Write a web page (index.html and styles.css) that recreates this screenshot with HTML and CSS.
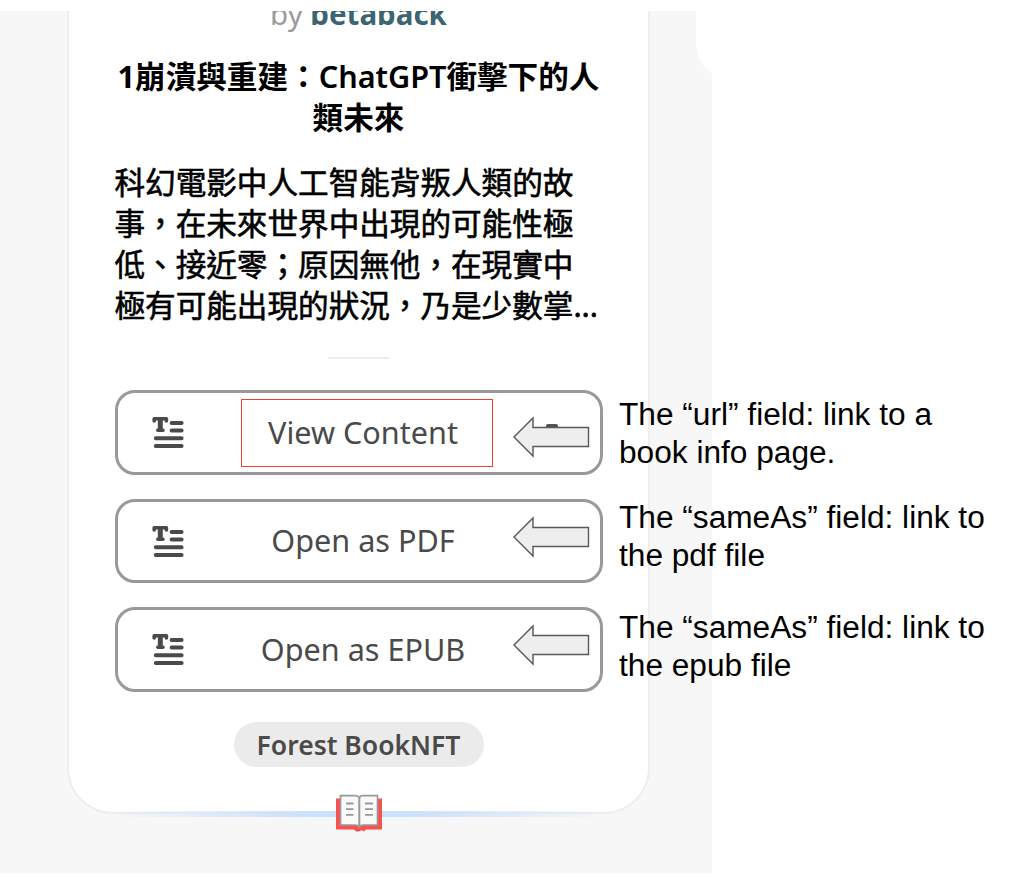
FILE: index.html
```html
<!DOCTYPE html>
<html lang="zh-Hant">
<head>
<meta charset="utf-8">
<title>Forest BookNFT</title>
<link rel="stylesheet" href="styles.css">
</head>
<body>
<svg width="0" height="0" class="defs">
  <symbol id="text-icon" viewBox="0 0 34 34">
    <g fill="none" stroke="#4a4a4a" stroke-linecap="round">
      <path d="M3.2 6V3.8H15.4V6M6.8 15.3H12" stroke-width="3.6" stroke-linejoin="round"/>
      <path d="M9.3 4V15" stroke-width="5" stroke-linecap="butt"/>
      <path d="M20.6 8H30.6M20.6 15.6H30.6M4.8 23.3H30.6M4.8 31H30.6" stroke-width="4"/>
    </g>
  </symbol>
  <symbol id="arrow" viewBox="0 0 78 42">
    <path d="M2 21L21 2V11.5H76.5V30.5H21V40Z" fill="#eee" stroke="#595959" stroke-width="1.4"/>
  </symbol>
</svg>
<main class="panel">
  <svg class="notch" viewBox="0 0 16 65"><path d="M0 0H16V63C6 54 0 45 0 31Z" fill="#fff"/></svg>
  <article class="card">
    <div class="byline"><p>by <b>betaback</b></p></div>
    <h1 class="title">1崩潰與重建：<span class="latin">ChatGPT</span>衝擊下的人<br>類未來</h1>
    <p class="summary">科幻電影中人工智能背叛人類的故<br>事，在未來世界中出現的可能性極<br>低、接近零；原因無他，在現實中<br>極有可能出現的狀況，乃是少數掌<span class="dots">...</span></p>
    <hr class="rule">
    <div class="actions">
      <a class="action first"><svg class="icon"><use href="#text-icon"/></svg><span class="label">View Content</span><i class="dash"></i><svg class="arrow"><use href="#arrow"/></svg><i class="highlight"></i></a>
      <a class="action"><svg class="icon"><use href="#text-icon"/></svg><span class="label">Open as PDF</span><svg class="arrow"><use href="#arrow"/></svg></a>
      <a class="action"><svg class="icon"><use href="#text-icon"/></svg><span class="label">Open as EPUB</span><svg class="arrow"><use href="#arrow"/></svg></a>
    </div>
    <span class="tag">Forest BookNFT</span>
    <div class="glow"></div>
    <svg class="book" viewBox="0 0 48 38">
      <path d="M1 4.5H47V35.5H31L29 37.5L26.5 36L24 37.5L21 37.5L19 35.5H1Z" fill="#f8514f"/>
      <path d="M5.5 1.7H20Q23 1.7 24.3 3.5Q25.5 1.7 28.5 1.7H42.5V31H28Q25.5 31 24.3 33Q23 31 20 31H5.5Z" fill="#fafafa" stroke="#999" stroke-width="1.7"/>
      <path d="M24.3 3.5V33" stroke="#999" stroke-width="2"/>
      <path d="M11 9.5H18.5M11 15.2H18.5M11 20.9H18.5M30 9.5H38M30 15.2H38M30 20.9H38" stroke="#999" stroke-width="1.8"/>
    </svg>
  </article>
</main>
<aside class="notes">
  <p>The “url” field: link to a<br>book info page.</p>
  <p>The “sameAs” field: link to<br>the pdf file</p>
  <p>The “sameAs” field: link to<br>the epub file</p>
</aside>
</body>
</html>
```
FILE: styles.css
```css
* { box-sizing: border-box; }
body { margin: 0; padding-top: 11px; height: 882px; background: #fff; overflow: hidden; font-family: "Noto Sans", "Noto Sans CJK TC", sans-serif; position: relative; }
.defs { position: absolute; }
p, h1 { margin: 0; }
.panel { position: relative; width: 712px; height: 862px; padding-left: 67px; background: #f7f7f7; }
.notch { position: absolute; right: 0; top: 0; width: 16px; height: 65px; }
.card { position: relative; width: 583px; height: 803px; padding: 0 45px; background: #fff; border: 2px solid #eee; border-top: 0; border-radius: 0 0 46px 46px; display: flex; flex-direction: column; align-items: center; }
.byline { height: 24px; width: 100%; overflow: hidden; display: flex; justify-content: center; align-items: flex-end; color: #9b9b9b; font-size: 29.5px; line-height: 42px; }
.byline b { color: #3b6570; font-weight: 700; }
.title { margin-top: 21px; width: 488px; font-size: 30.6px; line-height: 41px; font-weight: 700; text-align: center; white-space: nowrap; color: #000; }
.latin { font-weight: 600; }
.summary { margin-top: 23px; width: 488px; font-family: "Noto Sans CJK TC", sans-serif; font-size: 30.6px; line-height: 41px; white-space: nowrap; color: #000; -webkit-text-stroke: 0.6px #000; }
.dots { font-family: "Noto Sans", sans-serif; }
.rule { margin: 31px 0 0; border: 0; width: 61px; height: 2px; background: #eee; }
.actions { margin-top: 31px; display: flex; flex-direction: column; gap: 24px; }
.action { position: relative; width: 488px; height: 84.5px; border: 3px solid #999; border-radius: 20px; display: flex; align-items: center; justify-content: center; padding: 0 0 1px 9px; color: #4a4a4a; font-size: 30.6px; line-height: 42px; }
.icon { position: absolute; left: 33.5px; top: 22px; width: 34px; height: 34px; }
.arrow { position: absolute; left: 394px; top: 14px; width: 78px; height: 42px; }
.first .arrow { top: 23px; }
.dash { position: absolute; left: 428px; top: 31px; width: 12px; height: 5px; background: #555; border-radius: 2px; }
.highlight { position: absolute; left: 123px; top: 6px; width: 252px; height: 68px; border: 1.5px solid #f04030; }
.tag { margin-top: 30px; width: 250px; height: 45px; border-radius: 23px; background: #ebebeb; color: #4a4a4a; font-size: 26.5px; line-height: 46px; font-weight: 600; text-align: center; white-space: nowrap; }
.glow { position: absolute; left: 35px; right: 35px; bottom: -5px; height: 6px; background: linear-gradient(90deg, transparent, #cbe0fa 40%, #cbe0fa 60%, transparent); }
.book { position: absolute; left: 266px; bottom: -20px; width: 48px; height: 38px; }
.notes { position: absolute; left: 619px; top: 395px; display: flex; flex-direction: column; font: 31.65px/38px "Liberation Sans", sans-serif; color: #000; white-space: nowrap; }
.notes p + p { margin-top: 27px; }
.notes p:last-child { margin-top: 34px; }
```
